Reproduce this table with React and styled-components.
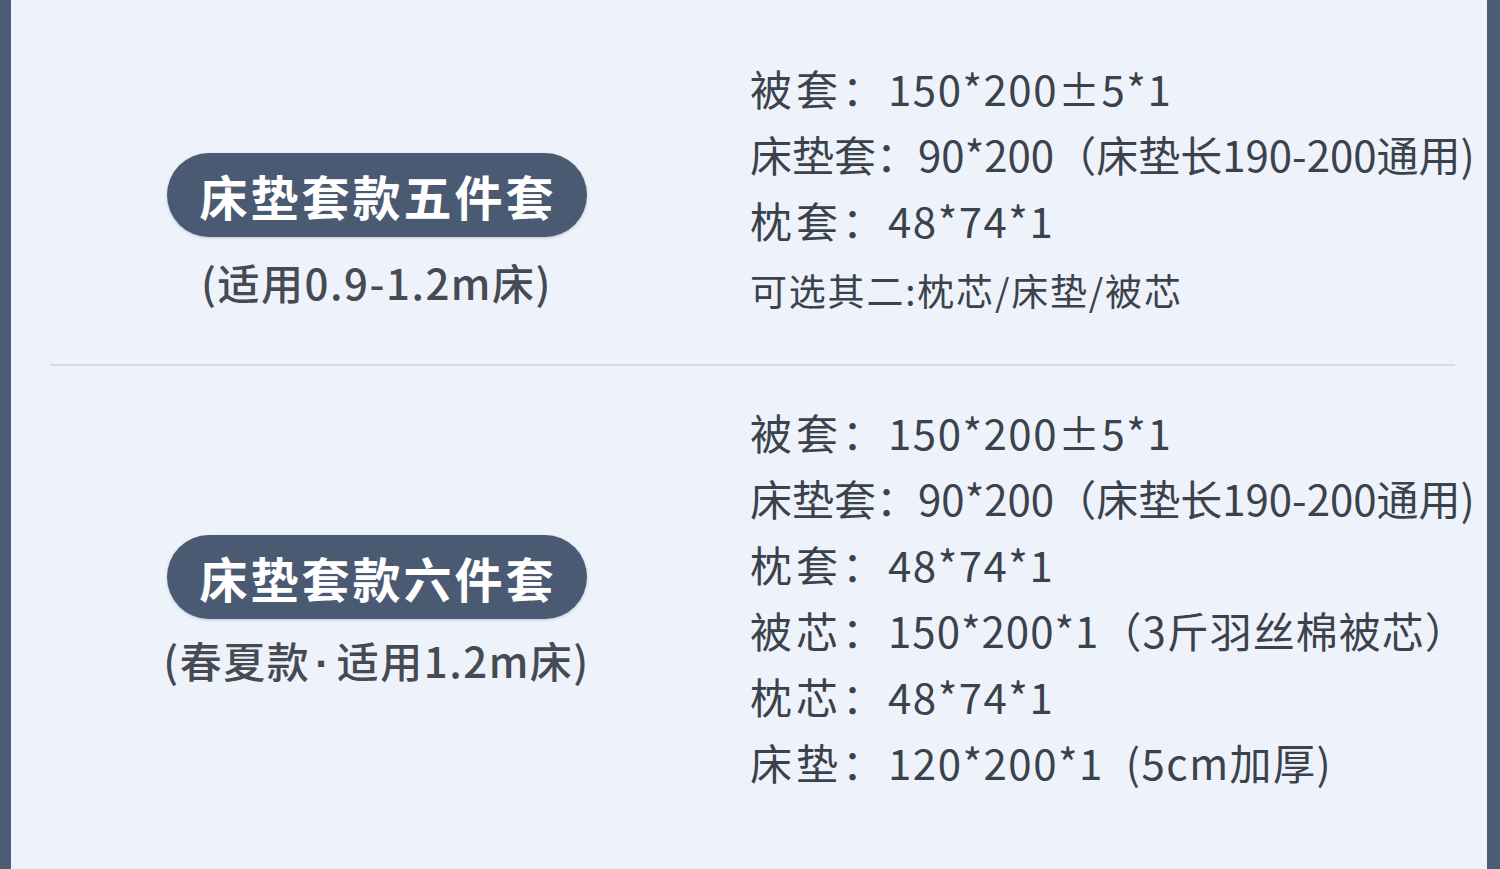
import React from 'react'
import styled, { createGlobalStyle } from 'styled-components'

const GlobalStyle = createGlobalStyle`
  html, body {
    margin: 0;
    padding: 0;
    background: #eef3fb;
  }
  body {
    font-family: "Noto Sans CJK SC", "Noto Sans", sans-serif;
  }
`

// tight: the long line is set without extra tracking so it fits the panel
const sets = [
  {
    title: '床垫套款五件套',
    note: ['(适用0.9-1.2m床)'],
    leftTop: 153,
    noteGap: 20,
    rightTop: 55,
    height: 364,
    lines: [
      { label: '被套：', value: '150*200±5*1' },
      { label: '床垫套：', value: '90*200（床垫长190-200通用)', tight: true },
      { label: '枕套：', value: '48*74*1' },
    ],
    extra: '可选其二:枕芯/床垫/被芯',
  },
  {
    title: '床垫套款六件套',
    note: ['(春夏款', '适用1.2m床)'],
    leftTop: 169,
    noteGap: 16,
    rightTop: 33,
    height: 503,
    lines: [
      { label: '被套：', value: '150*200±5*1' },
      { label: '床垫套：', value: '90*200（床垫长190-200通用)', tight: true },
      { label: '枕套：', value: '48*74*1' },
      { label: '被芯：', value: '150*200*1（3斤羽丝棉被芯）', spacing: 1 },
      { label: '枕芯：', value: '48*74*1' },
      { label: '床垫：', value: '120*200*1\u00a0\u00a0(5cm加厚)' },
    ],
  },
]

function App() {
  return (
    <>
      <GlobalStyle />
      <Frame>
        {sets.map((s, i) => (
          <React.Fragment key={s.title}>
            {i > 0 && <Divider />}
            <Section $height={s.height}>
              <LeftCol $top={s.leftTop}>
                <Pill>{s.title}</Pill>
                <Note $gap={s.noteGap}>
                  {s.note[0]}
                  {s.note[1] && (
                    <>
                      <Dot>·</Dot>
                      {s.note[1]}
                    </>
                  )}
                </Note>
              </LeftCol>
              <RightCol $top={s.rightTop}>
                {s.lines.map((l) => (
                  <Spec key={l.label + l.value}>
                    <Label $tight={l.tight}>{l.label}</Label>
                    <Value $tight={l.tight} $spacing={l.spacing}>
                      {l.value}
                    </Value>
                  </Spec>
                ))}
                {s.extra && <Extra>{s.extra}</Extra>}
              </RightCol>
            </Section>
          </React.Fragment>
        ))}
      </Frame>
    </>
  )
}

export default App

const Frame = styled.div`
  box-sizing: border-box;
  width: 1500px;
  height: 869px;
  background: #eef3fb;
  border-left: 11px solid #4d5c76;
  border-right: 13px solid #4d5c76;
  display: flex;
  flex-direction: column;
`

const Section = styled.div`
  display: grid;
  grid-template-columns: 731px 1fr;
  height: ${(p) => p.$height}px;
  flex-shrink: 0;
`

const LeftCol = styled.div`
  display: flex;
  flex-direction: column;
  align-items: center;
  padding-top: ${(p) => p.$top}px;
`

const Pill = styled.div`
  width: 420px;
  height: 84px;
  border-radius: 42px;
  background: #4a5a72;
  color: #ffffff;
  font-size: 48px;
  font-weight: 700;
  letter-spacing: 3px;
  text-indent: 3px;
  display: flex;
  align-items: center;
  justify-content: center;
  box-shadow: 0 1px 3px rgba(40, 55, 80, 0.25);
`

const Note = styled.div`
  margin-top: ${(p) => p.$gap}px;
  font-size: 42px;
  font-weight: 500;
  line-height: 50px;
  letter-spacing: 1.5px;
  color: #454a53;
  white-space: nowrap;
`

const Dot = styled.span`
  font-family: "Liberation Sans", sans-serif;
  font-weight: 700;
  margin: 0 6px 0 5px;
`

const RightCol = styled.div`
  display: flex;
  flex-direction: column;
  padding-left: 8px;
  padding-top: ${(p) => p.$top}px;
  min-width: 0;
`

const Spec = styled.div`
  display: flex;
  font-size: 42px;
  line-height: 66px;
  height: 66px;
  color: #3c424b;
  white-space: pre;
`

const Label = styled.span`
  letter-spacing: ${(p) => (p.$tight ? 0 : 4)}px;
`

const Value = styled.span`
  letter-spacing: ${(p) => (p.$tight ? 0 : p.$spacing ?? 1.5)}px;
`

const Extra = styled.div`
  margin-top: 4px;
  font-size: 37px;
  line-height: 66px;
  letter-spacing: 1.8px;
  color: #3c424b;
  white-space: nowrap;
`

const Divider = styled.div`
  height: 2px;
  margin: 0 32px 0 39px;
  background: #d5dce6;
  flex-shrink: 0;
`
